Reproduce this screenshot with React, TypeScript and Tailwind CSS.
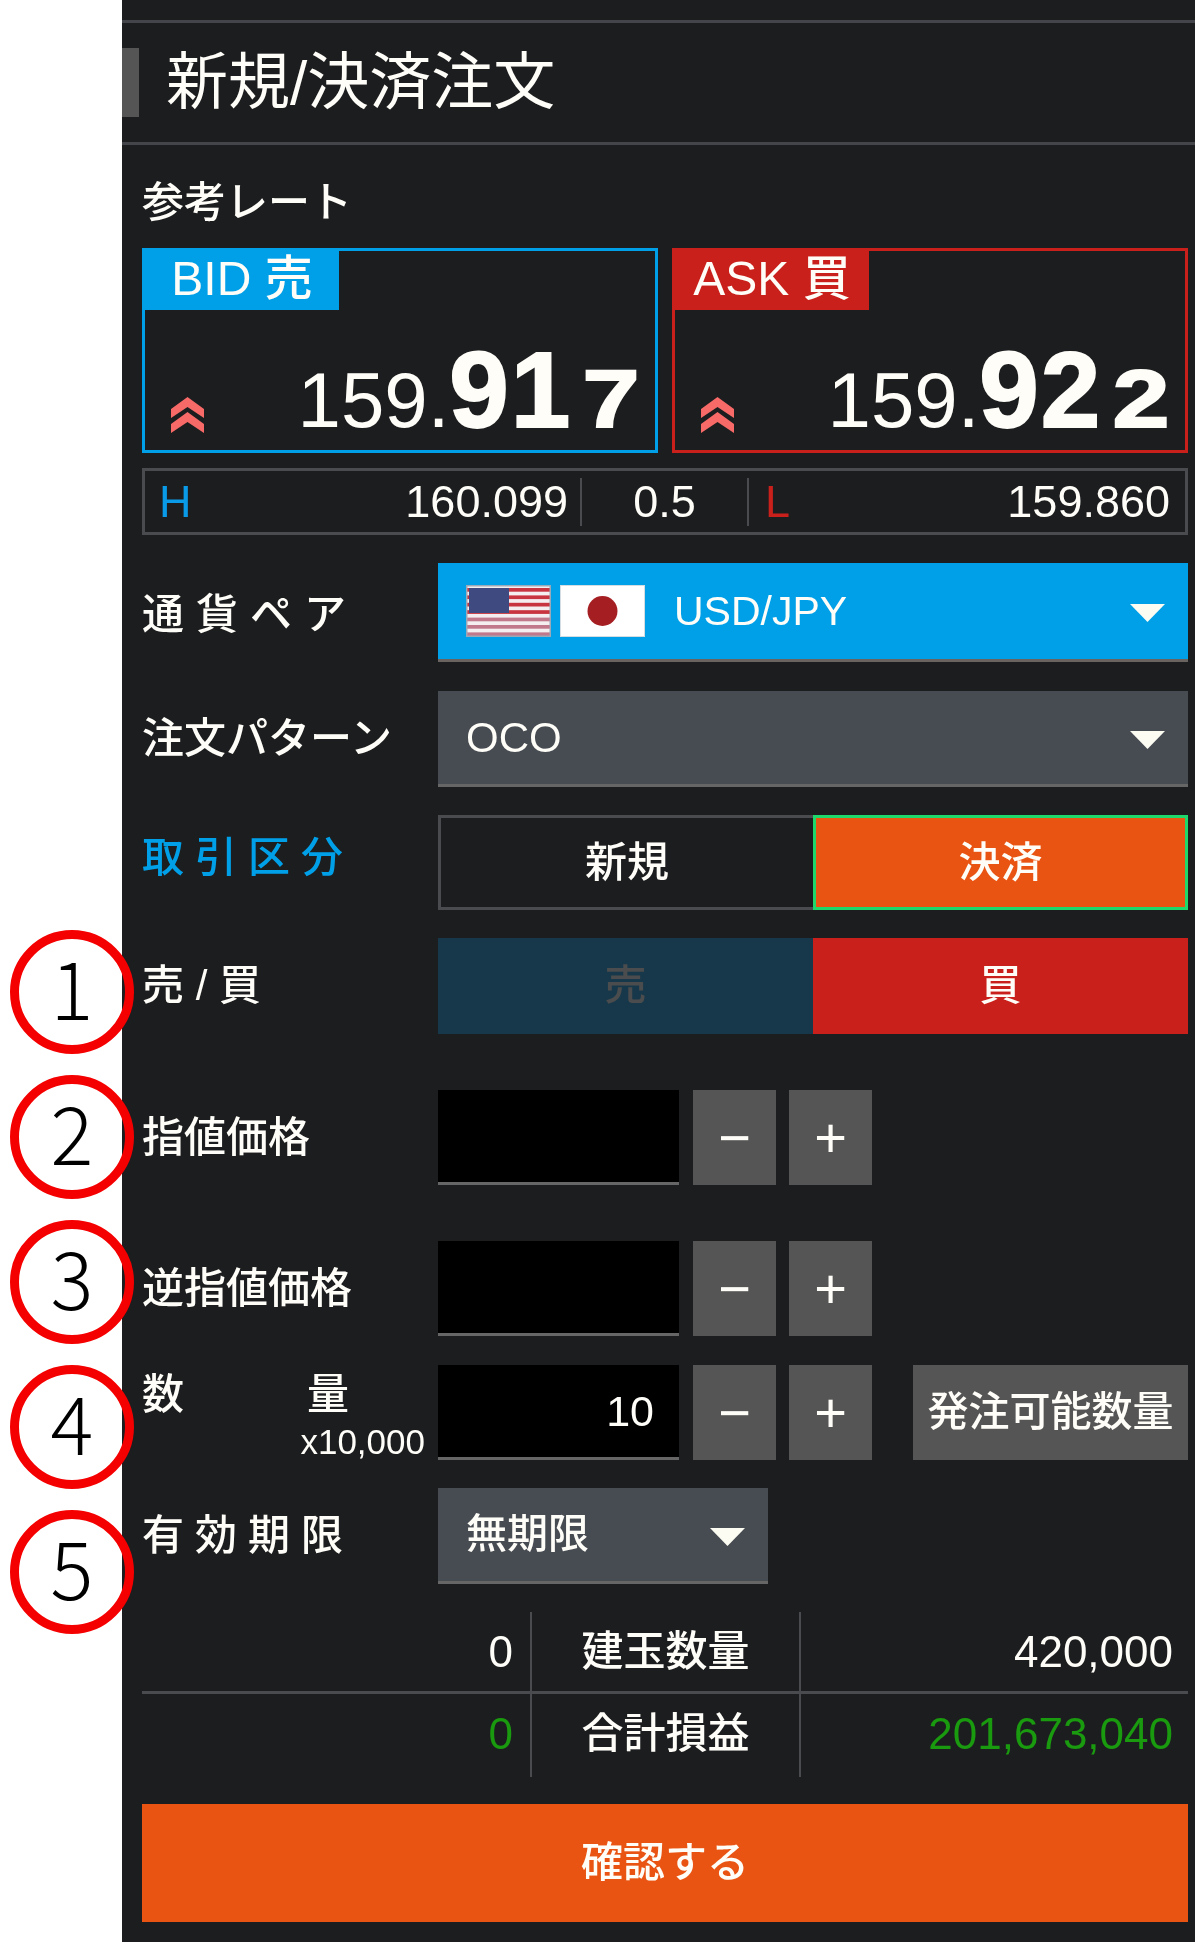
// Order panel for the FX ticket, with the numbered call-outs down the left edge.
const FONT = 'font-["Liberation_Sans","Noto_Sans_CJK_JP",sans-serif]'

function Triangle() {
  return (
    <svg width="35" height="18" viewBox="0 0 35 18" className="mt-[4px] shrink-0">
      <polygon points="0,0 35,0 17.5,18" fill="#fdfcf2" />
    </svg>
  )
}

function UpArrows() {
  return (
    <svg width="37" height="36" viewBox="0 0 37 36" className="shrink-0">
      <path d="M18.5 0 L35 12 L35 21 L18.5 10 L2 21 L2 12 Z" fill="#f86a68" />
      <path d="M18.5 15 L35 27 L35 36 L18.5 25 L2 36 L2 27 Z" fill="#f86a68" />
    </svg>
  )
}

function UsFlag() {
  const stripes = [0, 1, 2, 3, 4, 5, 6]
  return (
    <svg width="85" height="52" viewBox="0 0 85 52" className="shrink-0">
      <rect width="85" height="52" fill="#f4eef0" />
      {stripes.map((i) => (
        <rect key={i} x="0" y={3 + i * 7.4} width="85" height="3.7" fill={i < 4 ? '#c8343f' : '#c0788a'} />
      ))}
      <rect x="3" y="3" width="40" height="25" fill="#3f4a80" />
      <rect width="85" height="52" fill="none" stroke="#9aa8b8" strokeWidth="3" />
    </svg>
  )
}

function JpFlag() {
  return (
    <svg width="85" height="52" viewBox="0 0 85 52" className="shrink-0">
      <rect width="85" height="52" fill="#ffffff" />
      <circle cx="42.5" cy="26" r="15" fill="#a51e22" />
      <rect width="85" height="52" fill="none" stroke="#d4dde2" strokeWidth="2" />
    </svg>
  )
}

function Callout({ n }: { n: number }) {
  return (
    <div className="flex h-[124px] w-[124px] items-center justify-center rounded-full border-[9px] border-[#f50000] pb-[14px] font-['Noto_Sans_CJK_JP',sans-serif] text-[80px] font-light leading-none text-black">
      {n}
    </div>
  )
}

function Row({ label, className, children }: { label: React.ReactNode; className: string; children: React.ReactNode }) {
  return (
    <div className={`flex items-center ${className}`}>
      <div className="w-[296px] shrink-0 text-[42px] leading-none">{label}</div>
      {children}
    </div>
  )
}

function StepButton({ sign }: { sign: string }) {
  return (
    <div className="flex h-[95px] w-[83px] shrink-0 items-center justify-center bg-[#555555] text-[56px] font-light leading-none">
      {sign}
    </div>
  )
}

function Steppers() {
  return (
    <div className="ml-[14px] flex gap-[13px]">
      <StepButton sign="−" />
      <StepButton sign="+" />
    </div>
  )
}

function PriceInput({ value }: { value?: string }) {
  return (
    <div className="flex h-[95px] w-[241px] shrink-0 items-center justify-end border-b-[3px] border-[#666666] bg-black pr-[25px] text-[43px] leading-none">
      {value}
    </div>
  )
}

function Price({ head, big, tail }: { head: string; big: string; tail: string }) {
  return (
    <div className="flex items-baseline font-['Liberation_Sans',sans-serif] leading-none">
      <span className="text-[78px]">{head}</span>
      <span className="text-[107px] font-bold tracking-[2px] [-webkit-text-stroke:2px_currentColor]">{big}</span>
      <span className="ml-[22px] inline-block origin-right scale-x-[1.25] text-[82px] font-bold [-webkit-text-stroke:2px_currentColor]">
        {tail}
      </span>
    </div>
  )
}

function RateBox({ tag, color, head, big, tail }: { tag: string; color: string; head: string; big: string; tail: string }) {
  return (
    <div className={`h-[205px] w-[516px] border-[3px] ${color === 'bid' ? 'border-[#00a0e9]' : 'border-[#c9201c]'}`}>
      <div
        className={`flex h-[59px] w-[194px] items-center justify-center pb-[3px] text-[48px] leading-none ${
          color === 'bid' ? 'bg-[#00a0e9]' : 'bg-[#c9201c]'
        }`}
      >
        {tag}
      </div>
      <div className="mt-[27px] flex items-end justify-between pl-[24px] pr-[15px]">
        <div className="pb-[11px]">
          <UpArrows />
        </div>
        <Price head={head} big={big} tail={tail} />
      </div>
    </div>
  )
}

export default function App() {
  return (
    <div className={`flex h-[1942px] w-[1195px] overflow-hidden bg-white ${FONT} text-[#fffdf8]`}>
      <div className="relative z-10 flex w-[122px] shrink-0 flex-col gap-[21px] pl-[10px] pt-[930px]">
        {[1, 2, 3, 4, 5].map((n) => (
          <div key={n} className="w-[124px] shrink-0">
            <Callout n={n} />
          </div>
        ))}
      </div>

      <div className="flex-1 bg-[#1c1d1f] font-medium blur-[0.7px]">
        <div className="mt-[20px] h-[3px] bg-[#43454b]" />
        <div className="flex h-[119px] items-center">
          <div className="h-[69px] w-[17px] bg-[#555555]" />
          <div className="ml-[27px] text-[62px] font-normal leading-none">新規/決済注文</div>
        </div>
        <div className="h-[3px] bg-[#43454b]" />

        <div className="pl-[20px] pr-[7px]">
          <div className="mt-[37px] text-[42px] leading-none">参考レート</div>

          <div className="mt-[24px] flex justify-between">
            <RateBox tag="BID 売" color="bid" head="159." big="91" tail="7" />
            <RateBox tag="ASK 買" color="ask" head="159." big="92" tail="2" />
          </div>

          <div className="mt-[15px] flex h-[67px] items-center border-[3px] border-[#4a4b4e] font-['Liberation_Sans',sans-serif] text-[45px] leading-none">
            <div className="flex h-[48px] w-[437px] items-center justify-between border-r-[2px] border-[#4a4b4e] pl-[14px] pr-[12px]">
              <span className="text-[#0a9be8]">H</span>
              <span>160.099</span>
            </div>
            <div className="flex h-[48px] w-[167px] items-center justify-center border-r-[2px] border-[#4a4b4e]">0.5</div>
            <div className="flex h-[48px] flex-1 items-center justify-between pl-[16px] pr-[15px]">
              <span className="text-[#c9201c]">L</span>
              <span>159.860</span>
            </div>
          </div>

          <Row label={<span className="relative top-[2px] tracking-[12px]">通貨ペア</span>} className="mt-[28px]">
            <div className="flex h-[99px] flex-1 items-center justify-between border-b-[3px] border-[#6a6460] bg-[#00a0e9] pl-[28px] pr-[23px]">
              <div className="flex items-center">
                <UsFlag />
                <div className="ml-[9px]">
                  <JpFlag />
                </div>
                <span className="ml-[29px] font-['Liberation_Sans',sans-serif] text-[41px] leading-none">USD/JPY</span>
              </div>
              <Triangle />
            </div>
          </Row>

          <Row label="注文パターン" className="mt-[29px]">
            <div className="flex h-[96px] flex-1 items-center justify-between border-b-[3px] border-[#666666] bg-[#474c53] pl-[28px] pr-[23px]">
              <span className="font-['Liberation_Sans',sans-serif] text-[42px] leading-none">OCO</span>
              <Triangle />
            </div>
          </Row>

          <Row label={<span className="relative top-[-5px] tracking-[11px] text-[#00a0e9]">取引区分</span>} className="mt-[28px]">
            <div className="flex h-[95px] flex-1 text-[42px] leading-none">
              <div className="flex w-[375px] items-center justify-center border-[3px] border-r-0 border-[#4a4b4e]">新規</div>
              <div className="flex flex-1 items-center justify-center border-[3px] border-[#1fd86b] bg-[#e95412]">決済</div>
            </div>
          </Row>

          <Row label="売 / 買" className="mt-[28px]">
            <div className="flex h-[96px] flex-1 text-[42px] leading-none">
              <div className="flex w-[375px] items-center justify-center bg-[#17384a] text-[#4a4c4d]">売</div>
              <div className="flex flex-1 items-center justify-center bg-[#c9201c]">買</div>
            </div>
          </Row>

          <Row label="指値価格" className="mt-[56px]">
            <PriceInput />
            <Steppers />
          </Row>

          <Row label="逆指値価格" className="mt-[56px]">
            <PriceInput />
            <Steppers />
          </Row>

          <Row
            label={
              <div className="flex flex-col pt-[7px]">
                <div className="flex">
                  <span className="w-[165px]">数</span>
                  <span>量</span>
                </div>
                <div className="mt-[8px] pr-[13px] text-right font-['Liberation_Sans',sans-serif] text-[35px]">x10,000</div>
              </div>
            }
            className="mt-[29px]"
          >
            <PriceInput value="10" />
            <Steppers />
            <div className="ml-[41px] flex h-[95px] flex-1 items-center justify-center bg-[#555555] text-[41px] leading-none">
              発注可能数量
            </div>
          </Row>

          <Row label={<span className="tracking-[11px]">有効期限</span>} className="mt-[28px]">
            <div className="flex h-[96px] w-[330px] items-center justify-between border-b-[3px] border-[#666666] bg-[#474c53] pl-[28px] pr-[23px]">
              <span className="text-[41px] leading-none">無期限</span>
              <Triangle />
            </div>
          </Row>

          <div className="mt-[28px] grid grid-cols-[388px_271px_387px] text-[42px] leading-none">
            <div className="flex h-[79px] items-center justify-end pr-[17px] font-['Liberation_Sans',sans-serif] text-[44px]">0</div>
            <div className="flex h-[79px] items-center justify-center border-x-[2px] border-[#4a4b4e]">建玉数量</div>
            <div className="flex h-[79px] items-center justify-end pr-[15px] font-['Liberation_Sans',sans-serif] text-[44px]">420,000</div>
            <div className="col-span-3 h-[3px] bg-[#4a4b4e]" />
            <div className="flex h-[83px] items-center justify-end pb-[4px] pr-[17px] font-['Liberation_Sans',sans-serif] text-[44px] text-[#1a9a0f]">0</div>
            <div className="flex h-[83px] items-center justify-center border-x-[2px] border-[#4a4b4e] pb-[4px]">合計損益</div>
            <div className="flex h-[83px] items-center justify-end pb-[4px] pr-[15px] font-['Liberation_Sans',sans-serif] text-[44px] text-[#1a9a0f]">201,673,040</div>
          </div>

          <div className="mt-[27px] flex h-[118px] items-center justify-center bg-[#e95412] text-[42px] leading-none">
            確認する
          </div>
        </div>
      </div>
    </div>
  )
}
